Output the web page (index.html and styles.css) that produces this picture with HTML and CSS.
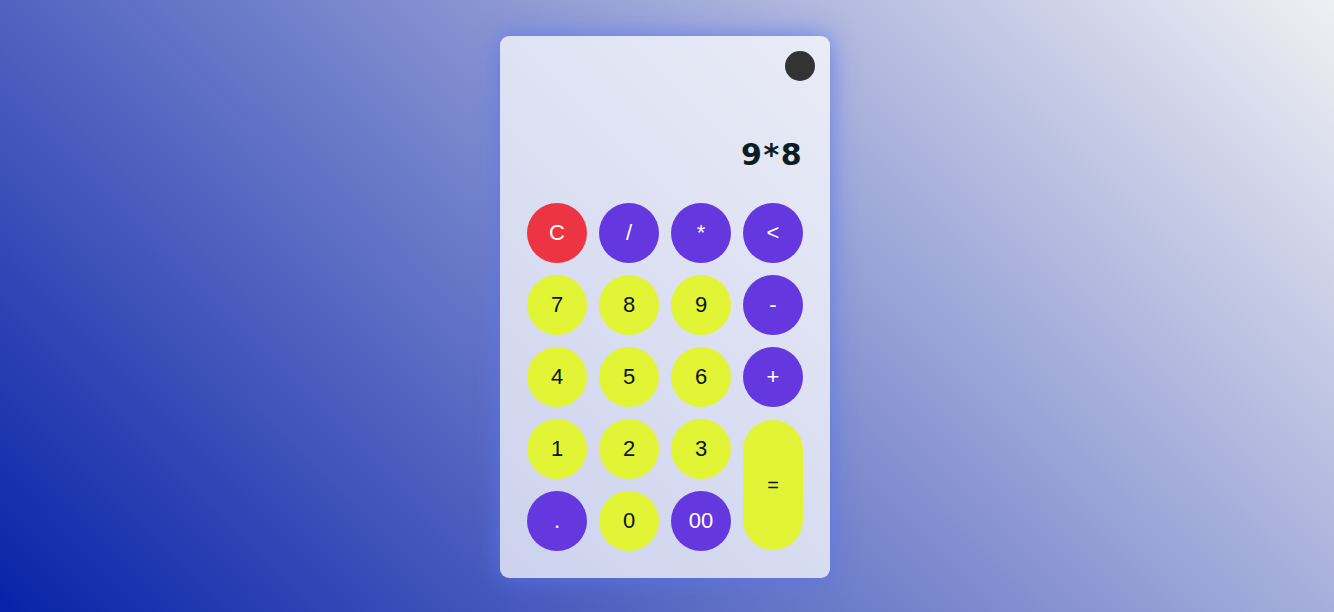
FILE: index.html
```html
<!DOCTYPE html>
<html lang="en">
<head>
<meta charset="utf-8">
<title>Calculator</title>
<link rel="stylesheet" href="styles.css">
</head>
<body>
<main class="page">
  <section class="calc">
    <button class="toggle" aria-label="Toggle theme"></button>
    <div class="display"><span class="expr">9*8</span></div>
    <div class="keys">
      <button class="key key-clear">C</button>
      <button class="key key-op">/</button>
      <button class="key key-op">*</button>
      <button class="key key-op">&lt;</button>
      <button class="key key-num">7</button>
      <button class="key key-num">8</button>
      <button class="key key-num">9</button>
      <button class="key key-op">-</button>
      <button class="key key-num">4</button>
      <button class="key key-num">5</button>
      <button class="key key-num">6</button>
      <button class="key key-op">+</button>
      <button class="key key-num">1</button>
      <button class="key key-num">2</button>
      <button class="key key-num">3</button>
      <button class="key key-num key-equals">=</button>
      <button class="key key-op">.</button>
      <button class="key key-num">0</button>
      <button class="key key-op">00</button>
    </div>
  </section>
</main>
</body>
</html>
```
FILE: styles.css
```css
* { box-sizing: border-box; }

html, body {
  margin: 0;
  height: 100%;
}

body {
  background: linear-gradient(45deg, #0822a8 0%, #eff0f3 100%);
  font-family: "Liberation Sans", Arial, sans-serif;
}

.page {
  height: 100%;
  display: flex;
  align-items: center;
  justify-content: center;
  padding-right: 4px;
  padding-top: 2px;
}

.calc {
  position: relative;
  width: 330px;
  padding: 27px;
  border-radius: 9px;
  background: rgba(255, 255, 255, 0.73);
  box-shadow: 0 0 24px rgba(90, 115, 235, 0.85);
  display: flex;
  flex-direction: column;
}

.toggle {
  position: absolute;
  top: 15px;
  right: 15px;
  width: 30px;
  height: 30px;
  border: none;
  border-radius: 50%;
  background: #333333;
  padding: 0;
}

.display {
  height: 110px;
  margin-bottom: 30px;
  display: flex;
  align-items: flex-end;
  justify-content: flex-end;
}

.expr {
  font-family: "DejaVu Sans", sans-serif;
  font-size: 30px;
  line-height: 36px;
  font-weight: bold;
  letter-spacing: 1.5px;
  color: #0b1c22;
}

.keys {
  display: grid;
  grid-template-columns: repeat(4, 60px);
  grid-auto-rows: 60px;
  gap: 12px;
}

.key {
  border: none;
  border-radius: 30px;
  padding: 0;
  font-family: "Liberation Sans", Arial, sans-serif;
  font-size: 22px;
  display: flex;
  align-items: center;
  justify-content: center;
}

.key-num {
  background: #e1f536;
  color: #111111;
}

.key-op {
  background: #6537df;
  color: #ffffff;
}

.key-clear {
  background: #ed3443;
  color: #ffffff;
}

.key-equals {
  grid-column: 4;
  grid-row: 4 / span 2;
  height: 130px;
  align-self: center;
  font-size: 20px;
}
```
